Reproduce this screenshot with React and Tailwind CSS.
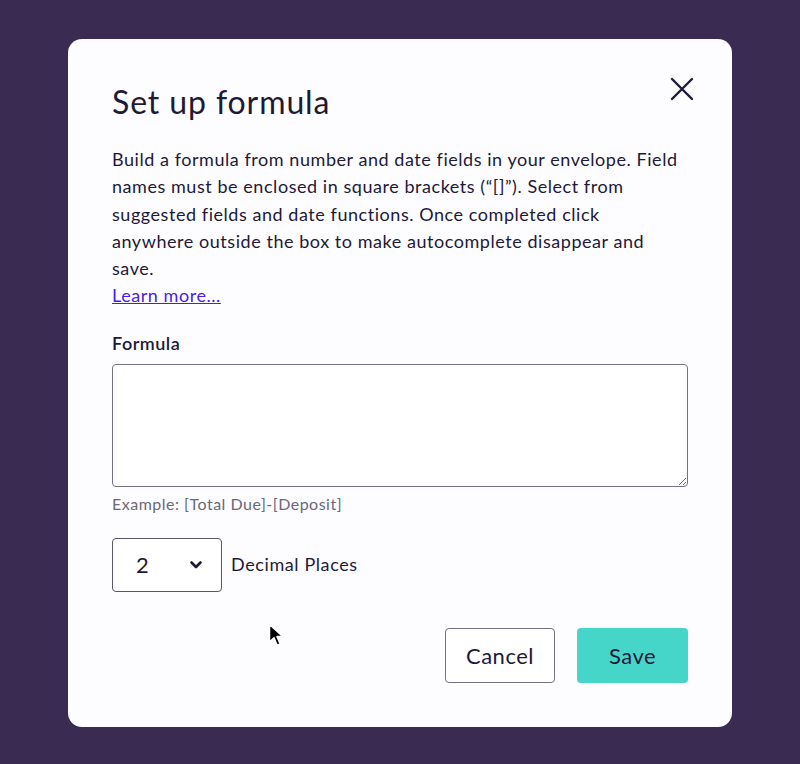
import React from "react";

export default function App() {
  return (
    <div className="w-[800px] h-[764px] bg-[#3a2b52] relative overflow-hidden" style={{ fontFamily: "Lato, 'Open Sans', sans-serif" }}>
      <div className="absolute left-[68px] top-[39px] w-[664px] h-[688px] bg-[#fdfcff] rounded-[14px] px-[44px] pt-[44px] text-[#1e1a36]">
        <div className="flex items-start justify-between">
          <h1 className="text-[32px] leading-[40px] font-normal mt-[-1px] tracking-[0.9px]">Set up formula</h1>
          <button className="mt-[-10px] mr-[-10px] p-1">
            <svg width="24" height="24" viewBox="0 0 24 24" fill="none" stroke="#1e1a36" strokeWidth="2.4" strokeLinecap="round">
              <path d="M2 2L22 22M22 2L2 22" />
            </svg>
          </button>
        </div>
        <p className="mt-[24px] text-[18px] leading-[27.3px] pr-[4px] tracking-[0.55px]">
          Build a formula from number and date fields in your envelope. Field names must be enclosed in square brackets (“[]”). Select from suggested fields and date functions. Once completed click anywhere outside the box to make autocomplete disappear and save.
          <br />
          <a href="#" className="text-[#4a1de6] underline">Learn more...</a>
        </p>
        <label className="block mt-[20px] text-[18px] font-semibold leading-[26px] tracking-[0.5px]">Formula</label>
        <textarea className="block mt-[8px] w-[576px] h-[123px] border border-[#74708a] rounded-[4px] bg-white resize-y" />
        <div className="mt-[7px] text-[16px] text-[#6b6878] leading-[20px] tracking-[0.5px]">Example: [Total Due]-[Deposit]</div>
        <div className="mt-[24px] flex items-center gap-[9px]">
          <div className="w-[110px] h-[54px] border border-[#5a5670] rounded-[4px] flex items-center justify-between pl-[23px] pr-[18px] bg-white">
            <span className="text-[22px]">2</span>
            <svg width="14" height="10" viewBox="0 0 14 10" fill="none" stroke="#1e1a36" strokeWidth="2.6" strokeLinecap="round" strokeLinejoin="round">
              <path d="M2.5 2.5L7 7L11.5 2.5" />
            </svg>
          </div>
          <span className="text-[18px] tracking-[0.6px]">Decimal Places</span>
        </div>
        <div className="mt-[36px] flex justify-end gap-[22px]">
          <button className="w-[110px] h-[55px] border border-[#74708a] rounded-[4px] bg-white text-[22px] tracking-[0.5px]">Cancel</button>
          <button className="w-[111px] h-[55px] rounded-[4px] bg-[#45d6c9] text-[22px] tracking-[0.5px]">Save</button>
        </div>
      </div>
      <svg className="absolute left-[268px] top-[623px]" width="18" height="26" viewBox="0 0 18 26">
        <path d="M1.5 1.5L1.5 19L6 14.8L9.2 22.3L12.2 21L9 13.6L15 13.6Z" fill="#000" stroke="#fff" strokeWidth="1.5" strokeLinejoin="round" />
      </svg>
    </div>
  );
}
